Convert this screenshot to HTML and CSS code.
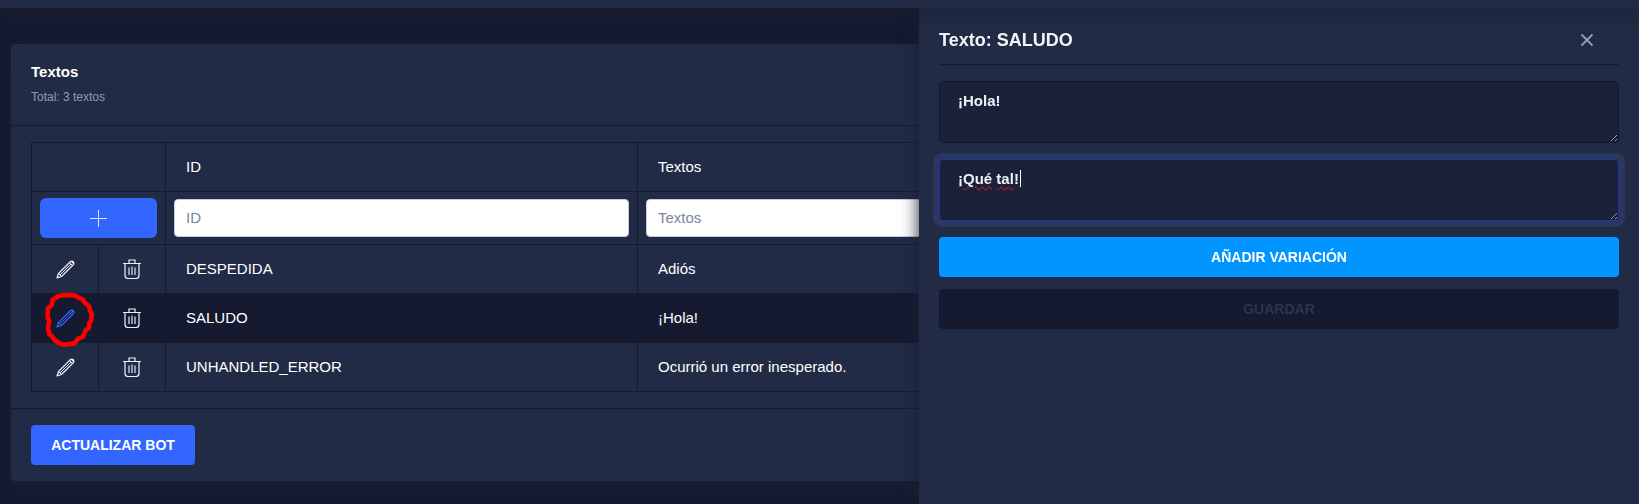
FILE: index.html
```html
<!DOCTYPE html>
<html lang="en">
<head>
    <meta charset="UTF-8">
    <meta name="viewport" content="width=device-width, initial-scale=1.0">
    <title>Textos</title>
    <link rel="stylesheet" href="styles.css">
</head>
<body>
    <svg class="defs" width="0" height="0">
        <symbol id="pencil" viewBox="0 0 20 20">
            <path d="M1 19 L2.5 14.5 L14.5 2.5 Q16 1.5 17.3 2.7 Q18.5 4 17.5 5.5 L5.5 17.5 Z" fill="none" stroke="currentColor" stroke-width="1.2" stroke-linejoin="round"/>
            <path d="M2.5 14.5 L5.5 17.5 M13.5 3.5 L16.5 6.5 M4 16 L15 5" fill="none" stroke="currentColor" stroke-width="1"/>
            <path d="M1 19 L1.7 16.8 L3.2 18.3 Z M14.8 2.6 Q16 1.5 17.3 2.7 Q18.5 4 17.4 5.2 Z" fill="currentColor"/>
        </symbol>
        <symbol id="trash" viewBox="0 0 18 20">
            <path d="M0 4.5 H18 M6 4.5 V1 H12 V4.5 M2 4.5 V16.5 Q2 19.5 5 19.5 H13 Q16 19.5 16 16.5 V4.5" fill="none" stroke="currentColor" stroke-width="1.2"/>
            <path d="M6 8.5 V16 M9 7.5 V16 M12 8.5 V16" fill="none" stroke="#a9b6cf" stroke-width="1.6"/>
        </symbol>
    </svg>

    <div class="topbar"></div>

    <main class="content">
        <section class="card">
            <header class="card-header">
                <h2 class="card-title">Textos</h2>
                <p class="card-subtitle">Total: 3 textos</p>
            </header>

            <div class="card-body">
                <table class="texts-table">
                    <colgroup>
                        <col class="col-action">
                        <col class="col-action">
                        <col class="col-id">
                        <col>
                    </colgroup>
                    <thead>
                        <tr>
                            <th colspan="2"></th>
                            <th>ID</th>
                            <th>Textos</th>
                        </tr>
                        <tr class="filter-row">
                            <td colspan="2">
                                <button class="btn-add" aria-label="Añadir">
                                    <svg width="17" height="17" viewBox="0 0 17 17"><path d="M8.5 0 V17 M0 8.5 H17" stroke="#dfe6ff" stroke-width="1"/></svg>
                                </button>
                            </td>
                            <td><input class="table-input" type="text" placeholder="ID"></td>
                            <td><input class="table-input" type="text" placeholder="Textos"></td>
                        </tr>
                    </thead>
                    <tbody>
                        <tr>
                            <td class="icon-cell"><svg class="icon-pencil"><use href="#pencil"/></svg></td>
                            <td class="icon-cell"><svg class="icon-trash"><use href="#trash"/></svg></td>
                            <td>DESPEDIDA</td>
                            <td>Adiós</td>
                        </tr>
                        <tr class="selected">
                            <td class="icon-cell">
                                <svg class="icon-pencil"><use href="#pencil"/></svg>
                                <svg class="scribble" viewBox="60 180 170 175">
                                    <path d="M112 195 L128 192 L160 193 L170 199 L185 205 L190 214 L204 226 L207 240 L212 248 L211 268 L205 276 L204 290 L193 300 L186 318 L170 325 L160 338 L125 342 L112 336 L100 328 L92 316 L84 310 L80 292 L84 272 L79 258 L80 232 L92 222 L93 208 Z" fill="none" stroke="#ff0000" stroke-width="14" stroke-linejoin="bevel"/>
                                </svg>
                            </td>
                            <td class="icon-cell"><svg class="icon-trash"><use href="#trash"/></svg></td>
                            <td>SALUDO</td>
                            <td>¡Hola!</td>
                        </tr>
                        <tr>
                            <td class="icon-cell"><svg class="icon-pencil"><use href="#pencil"/></svg></td>
                            <td class="icon-cell"><svg class="icon-trash"><use href="#trash"/></svg></td>
                            <td>UNHANDLED_ERROR</td>
                            <td>Ocurrió un error inesperado.</td>
                        </tr>
                    </tbody>
                </table>
            </div>

            <footer class="card-footer">
                <button class="btn-update">ACTUALIZAR BOT</button>
            </footer>
        </section>
    </main>

    <!-- Drawer -->
    <aside class="drawer">
        <div class="drawer-header">
            <h2 class="drawer-title">Texto: SALUDO</h2>
            <svg class="drawer-close" width="14" height="14" viewBox="0 0 14 14"><path d="M1.5 1.5 L12.5 12.5 M12.5 1.5 L1.5 12.5" stroke="#8f9bb3" stroke-width="2"/></svg>
        </div>
        <div class="variation">¡Hola!</div>
        <div class="variation focused">¡<span class="misspelled">Qué</span> <span class="misspelled">tal</span>!<span class="caret"></span></div>
        <button class="btn-variation">AÑADIR VARIACIÓN</button>
        <button class="btn-save" disabled>GUARDAR</button>
    </aside>
</body>
</html>
```

FILE: styles.css
```css
* {
    box-sizing: border-box;
}

html, body {
    height: 100%;
}

body {
    margin: 0;
    background-color: #151a30;
    color: #fff;
    font-family: "Liberation Sans", Arial, sans-serif;
    font-size: 15px;
    overflow: hidden;
}

.defs {
    position: absolute;
}

.topbar {
    position: relative;
    z-index: 3;
    height: 8px;
    background: #222b45;
    box-shadow: 0 8px 16px 0 #1a1f33;
}

.content {
    padding: 36px 11px 0;
}

.card {
    background: #222b45;
    border-radius: 4px;
    box-shadow: 0 8px 16px 0 #1a1f33;
}

.card-header {
    height: 82px;
    padding: 18px 20px 0;
    border-bottom: 1px solid #151a30;
}

.card-title {
    margin: 0;
    font-size: 15px;
    line-height: 20px;
    font-weight: bold;
}

.card-subtitle {
    margin: 7px 0 0;
    font-size: 12px;
    line-height: 16px;
    color: #8f9bb3;
}

.card-body {
    padding: 16px 20px;
    border-bottom: 1px solid #151a30;
}

.texts-table {
    width: 100%;
    table-layout: fixed;
    border-collapse: collapse;
}

.col-action {
    width: 67px;
}

.col-id {
    width: 472px;
}

.texts-table th,
.texts-table td {
    height: 49px;
    padding: 0 18px 2px 20px;
    border: 1px solid #151a30;
    font-weight: normal;
    text-align: left;
}

.texts-table .filter-row td {
    height: 53px;
    padding: 0 8px;
}

.texts-table td.icon-cell {
    position: relative;
    padding: 0;
    text-align: center;
}

.selected td {
    background: #151a30;
}

.table-input {
    display: block;
    width: 100%;
    height: 38px;
    padding: 0 11px 2px;
    background: #fff;
    border: 1px solid #c5cee0;
    border-radius: 4px;
    font-family: inherit;
    font-size: 15px;
}

.table-input::placeholder {
    color: #7c8798;
    opacity: 1;
}

.btn-add {
    display: flex;
    align-items: center;
    justify-content: center;
    width: 117px;
    height: 40px;
    background: #3366ff;
    border: none;
    border-radius: 6px;
}

.icon-pencil {
    display: block;
    width: 20px;
    height: 20px;
    margin: 0 auto;
    transform: translateX(1px);
    color: #edf1f7;
}

.selected .icon-pencil {
    color: #3366ff;
}

.icon-trash {
    display: block;
    width: 18px;
    height: 20px;
    margin: 0 auto;
    color: #edf1f7;
}

.scribble {
    position: absolute;
    left: 9px;
    top: -3px;
    width: 57px;
    height: 58px;
}

.card-footer {
    padding: 16px 20px;
}

.btn-update {
    width: 164px;
    height: 40px;
    background: #3366ff;
    color: #fff;
    border: none;
    border-radius: 4px;
    font-family: inherit;
    font-size: 14px;
    font-weight: bold;
}

.drawer {
    position: fixed;
    top: 8px;
    right: 0;
    bottom: 0;
    z-index: 2;
    display: flex;
    flex-direction: column;
    width: 720px;
    padding: 0 20px;
    background: #222b45;
    box-shadow: 0 0 16px 0 #1a1f33;
}

.drawer-header {
    display: flex;
    align-items: center;
    justify-content: space-between;
    flex: none;
    height: 57px;
    padding: 8px 25px 0 0;
    border-bottom: 1px solid #151a30;
}

.drawer-title {
    margin: 0;
    font-size: 18px;
    font-weight: bold;
    color: #f2f4f8;
}

.variation {
    flex: none;
    height: 62px;
    margin-top: 16px;
    padding: 9px 18px;
    background: #1a2138;
    border: 1px solid #151a30;
    border-radius: 4px;
    color: #edf1f7;
    font-size: 15px;
    line-height: 20px;
    font-weight: bold;
    resize: vertical;
    overflow: auto;
}

.focused {
    border-color: #1a34b8;
    box-shadow: 0 0 0 6px #2c3859;
}

.misspelled {
    text-decoration: underline wavy #e0152b 1px;
    text-underline-offset: 2px;
}

.caret {
    display: inline-block;
    width: 1px;
    height: 17px;
    margin-left: 1px;
    vertical-align: -3px;
    background: #fff;
}

.btn-variation,
.btn-save {
    flex: none;
    height: 40px;
    border: none;
    border-radius: 4px;
    font-family: inherit;
    font-size: 14px;
    font-weight: bold;
}

.btn-variation {
    margin-top: 16px;
    background: #0095ff;
    color: #fff;
}

.btn-save {
    margin-top: 12px;
    background: #151a30;
    color: #2b3553;
}
```
